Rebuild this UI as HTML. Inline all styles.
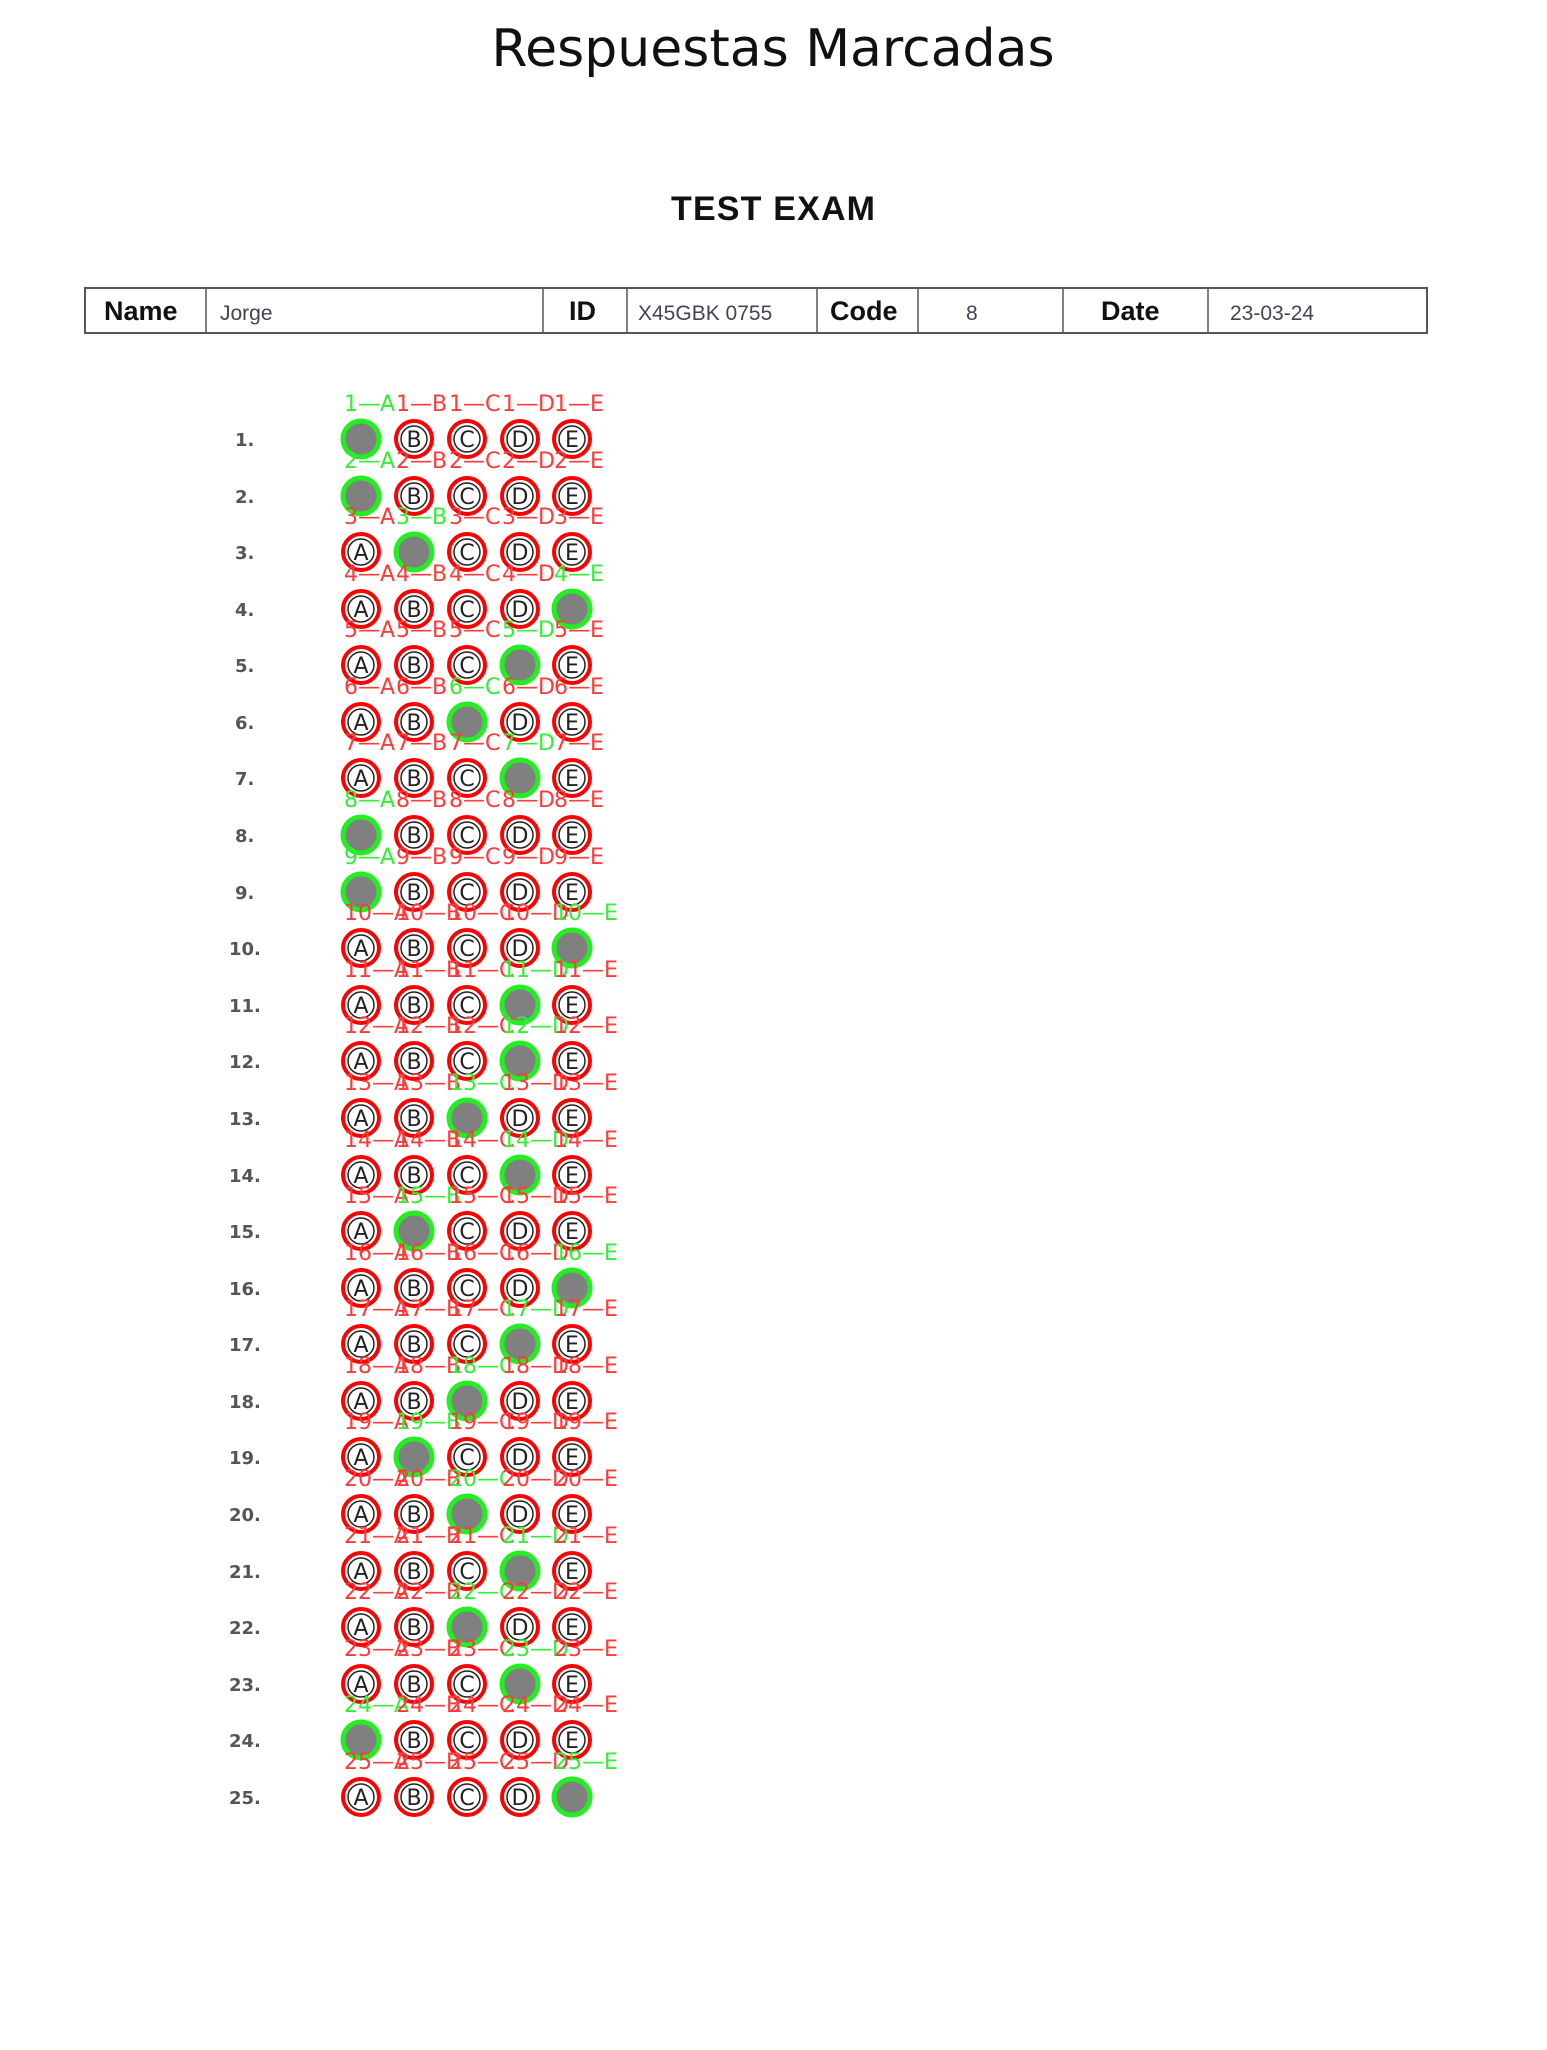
<!DOCTYPE html>
<html><head><meta charset="utf-8"><style>
body{margin:0;background:#fff;width:1547px;height:2050px;overflow:hidden}
svg{display:block}
.h{font-family:"DejaVu Sans",sans-serif;font-size:52px;fill:#111}
.t{font-family:"Liberation Sans",sans-serif;font-weight:bold;font-size:34px;fill:#111}
.tb{font-family:"Liberation Sans",sans-serif;font-weight:bold;font-size:27px;fill:#111}
.tv{font-family:"Liberation Sans",sans-serif;font-size:21px;fill:#445}
.n{font-family:"DejaVu Sans",sans-serif;font-weight:bold;font-size:18px;fill:#555}
.l{font-family:"DejaVu Sans",sans-serif;font-size:22px;fill:#222;text-anchor:middle}
.r{font-family:"DejaVu Sans",sans-serif;font-size:22px;fill:#ff3a3a}
.g{font-family:"DejaVu Sans",sans-serif;font-size:22px;fill:#33ee33}
</style></head><body>
<svg width="1547" height="2050" viewBox="0 0 1547 2050">
<defs>
<g id="u"><circle r="18" fill="none" stroke="#f00" stroke-width="4"/><circle r="13" fill="none" stroke="#222" stroke-width="1.5"/></g>
<g id="m"><circle r="18" fill="#808080" stroke="#22ee22" stroke-width="5"/></g>
</defs>
<text x="773" y="66" text-anchor="middle" class="h">Respuestas Marcadas</text>
<text x="773" y="220" text-anchor="middle" class="t" textLength="204">TEST EXAM</text>
<rect x="85" y="288" width="1342" height="45" fill="none" stroke="#555" stroke-width="2"/>
<g stroke="#555" stroke-width="1.5">
<line x1="206" y1="288" x2="206" y2="333"/><line x1="543" y1="288" x2="543" y2="333"/><line x1="627" y1="288" x2="627" y2="333"/><line x1="817" y1="288" x2="817" y2="333"/><line x1="918" y1="288" x2="918" y2="333"/><line x1="1063" y1="288" x2="1063" y2="333"/><line x1="1208" y1="288" x2="1208" y2="333"/>
</g>
<text x="104" y="320" class="tb">Name</text>
<text x="220" y="320" class="tv">Jorge</text>
<text x="569" y="320" class="tb">ID</text>
<text x="638" y="320" class="tv" font-size="19">X45GBK 0755</text>
<text x="830" y="320" class="tb">Code</text>
<text x="966" y="320" class="tv" font-size="19">8</text>
<text x="1101" y="320" class="tb">Date</text>
<text x="1230" y="320" class="tv" font-size="19">23-03-24</text>

<g transform="translate(0,439)"><text x="235" y="7" class="n">1.</text>
<use href="#m" x="361"/><use href="#u" x="414"/><text x="414" y="8" class="l">B</text><use href="#u" x="467"/><text x="467" y="8" class="l">C</text><use href="#u" x="520"/><text x="520" y="8" class="l">D</text><use href="#u" x="572"/><text x="572" y="8" class="l">E</text>
<text x="344" y="-28" class="g">1—A</text><text x="396" y="-28" class="r">1—B</text><text x="449" y="-28" class="r">1—C</text><text x="502" y="-28" class="r">1—D</text><text x="554" y="-28" class="r">1—E</text></g>

<g transform="translate(0,496)"><text x="235" y="7" class="n">2.</text>
<use href="#m" x="361"/><use href="#u" x="414"/><text x="414" y="8" class="l">B</text><use href="#u" x="467"/><text x="467" y="8" class="l">C</text><use href="#u" x="520"/><text x="520" y="8" class="l">D</text><use href="#u" x="572"/><text x="572" y="8" class="l">E</text>
<text x="344" y="-28" class="g">2—A</text><text x="396" y="-28" class="r">2—B</text><text x="449" y="-28" class="r">2—C</text><text x="502" y="-28" class="r">2—D</text><text x="554" y="-28" class="r">2—E</text></g>

<g transform="translate(0,552)"><text x="235" y="7" class="n">3.</text>
<use href="#u" x="361"/><text x="361" y="8" class="l">A</text><use href="#m" x="414"/><use href="#u" x="467"/><text x="467" y="8" class="l">C</text><use href="#u" x="520"/><text x="520" y="8" class="l">D</text><use href="#u" x="572"/><text x="572" y="8" class="l">E</text>
<text x="344" y="-28" class="r">3—A</text><text x="396" y="-28" class="g">3—B</text><text x="449" y="-28" class="r">3—C</text><text x="502" y="-28" class="r">3—D</text><text x="554" y="-28" class="r">3—E</text></g>

<g transform="translate(0,609)"><text x="235" y="7" class="n">4.</text>
<use href="#u" x="361"/><text x="361" y="8" class="l">A</text><use href="#u" x="414"/><text x="414" y="8" class="l">B</text><use href="#u" x="467"/><text x="467" y="8" class="l">C</text><use href="#u" x="520"/><text x="520" y="8" class="l">D</text><use href="#m" x="572"/>
<text x="344" y="-28" class="r">4—A</text><text x="396" y="-28" class="r">4—B</text><text x="449" y="-28" class="r">4—C</text><text x="502" y="-28" class="r">4—D</text><text x="554" y="-28" class="g">4—E</text></g>

<g transform="translate(0,665)"><text x="235" y="7" class="n">5.</text>
<use href="#u" x="361"/><text x="361" y="8" class="l">A</text><use href="#u" x="414"/><text x="414" y="8" class="l">B</text><use href="#u" x="467"/><text x="467" y="8" class="l">C</text><use href="#m" x="520"/><use href="#u" x="572"/><text x="572" y="8" class="l">E</text>
<text x="344" y="-28" class="r">5—A</text><text x="396" y="-28" class="r">5—B</text><text x="449" y="-28" class="r">5—C</text><text x="502" y="-28" class="g">5—D</text><text x="554" y="-28" class="r">5—E</text></g>

<g transform="translate(0,722)"><text x="235" y="7" class="n">6.</text>
<use href="#u" x="361"/><text x="361" y="8" class="l">A</text><use href="#u" x="414"/><text x="414" y="8" class="l">B</text><use href="#m" x="467"/><use href="#u" x="520"/><text x="520" y="8" class="l">D</text><use href="#u" x="572"/><text x="572" y="8" class="l">E</text>
<text x="344" y="-28" class="r">6—A</text><text x="396" y="-28" class="r">6—B</text><text x="449" y="-28" class="g">6—C</text><text x="502" y="-28" class="r">6—D</text><text x="554" y="-28" class="r">6—E</text></g>

<g transform="translate(0,778)"><text x="235" y="7" class="n">7.</text>
<use href="#u" x="361"/><text x="361" y="8" class="l">A</text><use href="#u" x="414"/><text x="414" y="8" class="l">B</text><use href="#u" x="467"/><text x="467" y="8" class="l">C</text><use href="#m" x="520"/><use href="#u" x="572"/><text x="572" y="8" class="l">E</text>
<text x="344" y="-28" class="r">7—A</text><text x="396" y="-28" class="r">7—B</text><text x="449" y="-28" class="r">7—C</text><text x="502" y="-28" class="g">7—D</text><text x="554" y="-28" class="r">7—E</text></g>

<g transform="translate(0,835)"><text x="235" y="7" class="n">8.</text>
<use href="#m" x="361"/><use href="#u" x="414"/><text x="414" y="8" class="l">B</text><use href="#u" x="467"/><text x="467" y="8" class="l">C</text><use href="#u" x="520"/><text x="520" y="8" class="l">D</text><use href="#u" x="572"/><text x="572" y="8" class="l">E</text>
<text x="344" y="-28" class="g">8—A</text><text x="396" y="-28" class="r">8—B</text><text x="449" y="-28" class="r">8—C</text><text x="502" y="-28" class="r">8—D</text><text x="554" y="-28" class="r">8—E</text></g>

<g transform="translate(0,892)"><text x="235" y="7" class="n">9.</text>
<use href="#m" x="361"/><use href="#u" x="414"/><text x="414" y="8" class="l">B</text><use href="#u" x="467"/><text x="467" y="8" class="l">C</text><use href="#u" x="520"/><text x="520" y="8" class="l">D</text><use href="#u" x="572"/><text x="572" y="8" class="l">E</text>
<text x="344" y="-28" class="g">9—A</text><text x="396" y="-28" class="r">9—B</text><text x="449" y="-28" class="r">9—C</text><text x="502" y="-28" class="r">9—D</text><text x="554" y="-28" class="r">9—E</text></g>

<g transform="translate(0,948)"><text x="229" y="7" class="n">10.</text>
<use href="#u" x="361"/><text x="361" y="8" class="l">A</text><use href="#u" x="414"/><text x="414" y="8" class="l">B</text><use href="#u" x="467"/><text x="467" y="8" class="l">C</text><use href="#u" x="520"/><text x="520" y="8" class="l">D</text><use href="#m" x="572"/>
<text x="344" y="-28" class="r">10—A</text><text x="396" y="-28" class="r">10—B</text><text x="449" y="-28" class="r">10—C</text><text x="502" y="-28" class="r">10—D</text><text x="554" y="-28" class="g">10—E</text></g>

<g transform="translate(0,1005)"><text x="229" y="7" class="n">11.</text>
<use href="#u" x="361"/><text x="361" y="8" class="l">A</text><use href="#u" x="414"/><text x="414" y="8" class="l">B</text><use href="#u" x="467"/><text x="467" y="8" class="l">C</text><use href="#m" x="520"/><use href="#u" x="572"/><text x="572" y="8" class="l">E</text>
<text x="344" y="-28" class="r">11—A</text><text x="396" y="-28" class="r">11—B</text><text x="449" y="-28" class="r">11—C</text><text x="502" y="-28" class="g">11—D</text><text x="554" y="-28" class="r">11—E</text></g>

<g transform="translate(0,1061)"><text x="229" y="7" class="n">12.</text>
<use href="#u" x="361"/><text x="361" y="8" class="l">A</text><use href="#u" x="414"/><text x="414" y="8" class="l">B</text><use href="#u" x="467"/><text x="467" y="8" class="l">C</text><use href="#m" x="520"/><use href="#u" x="572"/><text x="572" y="8" class="l">E</text>
<text x="344" y="-28" class="r">12—A</text><text x="396" y="-28" class="r">12—B</text><text x="449" y="-28" class="r">12—C</text><text x="502" y="-28" class="g">12—D</text><text x="554" y="-28" class="r">12—E</text></g>

<g transform="translate(0,1118)"><text x="229" y="7" class="n">13.</text>
<use href="#u" x="361"/><text x="361" y="8" class="l">A</text><use href="#u" x="414"/><text x="414" y="8" class="l">B</text><use href="#m" x="467"/><use href="#u" x="520"/><text x="520" y="8" class="l">D</text><use href="#u" x="572"/><text x="572" y="8" class="l">E</text>
<text x="344" y="-28" class="r">13—A</text><text x="396" y="-28" class="r">13—B</text><text x="449" y="-28" class="g">13—C</text><text x="502" y="-28" class="r">13—D</text><text x="554" y="-28" class="r">13—E</text></g>

<g transform="translate(0,1175)"><text x="229" y="7" class="n">14.</text>
<use href="#u" x="361"/><text x="361" y="8" class="l">A</text><use href="#u" x="414"/><text x="414" y="8" class="l">B</text><use href="#u" x="467"/><text x="467" y="8" class="l">C</text><use href="#m" x="520"/><use href="#u" x="572"/><text x="572" y="8" class="l">E</text>
<text x="344" y="-28" class="r">14—A</text><text x="396" y="-28" class="r">14—B</text><text x="449" y="-28" class="r">14—C</text><text x="502" y="-28" class="g">14—D</text><text x="554" y="-28" class="r">14—E</text></g>

<g transform="translate(0,1231)"><text x="229" y="7" class="n">15.</text>
<use href="#u" x="361"/><text x="361" y="8" class="l">A</text><use href="#m" x="414"/><use href="#u" x="467"/><text x="467" y="8" class="l">C</text><use href="#u" x="520"/><text x="520" y="8" class="l">D</text><use href="#u" x="572"/><text x="572" y="8" class="l">E</text>
<text x="344" y="-28" class="r">15—A</text><text x="396" y="-28" class="g">15—B</text><text x="449" y="-28" class="r">15—C</text><text x="502" y="-28" class="r">15—D</text><text x="554" y="-28" class="r">15—E</text></g>

<g transform="translate(0,1288)"><text x="229" y="7" class="n">16.</text>
<use href="#u" x="361"/><text x="361" y="8" class="l">A</text><use href="#u" x="414"/><text x="414" y="8" class="l">B</text><use href="#u" x="467"/><text x="467" y="8" class="l">C</text><use href="#u" x="520"/><text x="520" y="8" class="l">D</text><use href="#m" x="572"/>
<text x="344" y="-28" class="r">16—A</text><text x="396" y="-28" class="r">16—B</text><text x="449" y="-28" class="r">16—C</text><text x="502" y="-28" class="r">16—D</text><text x="554" y="-28" class="g">16—E</text></g>

<g transform="translate(0,1344)"><text x="229" y="7" class="n">17.</text>
<use href="#u" x="361"/><text x="361" y="8" class="l">A</text><use href="#u" x="414"/><text x="414" y="8" class="l">B</text><use href="#u" x="467"/><text x="467" y="8" class="l">C</text><use href="#m" x="520"/><use href="#u" x="572"/><text x="572" y="8" class="l">E</text>
<text x="344" y="-28" class="r">17—A</text><text x="396" y="-28" class="r">17—B</text><text x="449" y="-28" class="r">17—C</text><text x="502" y="-28" class="g">17—D</text><text x="554" y="-28" class="r">17—E</text></g>

<g transform="translate(0,1401)"><text x="229" y="7" class="n">18.</text>
<use href="#u" x="361"/><text x="361" y="8" class="l">A</text><use href="#u" x="414"/><text x="414" y="8" class="l">B</text><use href="#m" x="467"/><use href="#u" x="520"/><text x="520" y="8" class="l">D</text><use href="#u" x="572"/><text x="572" y="8" class="l">E</text>
<text x="344" y="-28" class="r">18—A</text><text x="396" y="-28" class="r">18—B</text><text x="449" y="-28" class="g">18—C</text><text x="502" y="-28" class="r">18—D</text><text x="554" y="-28" class="r">18—E</text></g>

<g transform="translate(0,1457)"><text x="229" y="7" class="n">19.</text>
<use href="#u" x="361"/><text x="361" y="8" class="l">A</text><use href="#m" x="414"/><use href="#u" x="467"/><text x="467" y="8" class="l">C</text><use href="#u" x="520"/><text x="520" y="8" class="l">D</text><use href="#u" x="572"/><text x="572" y="8" class="l">E</text>
<text x="344" y="-28" class="r">19—A</text><text x="396" y="-28" class="g">19—B</text><text x="449" y="-28" class="r">19—C</text><text x="502" y="-28" class="r">19—D</text><text x="554" y="-28" class="r">19—E</text></g>

<g transform="translate(0,1514)"><text x="229" y="7" class="n">20.</text>
<use href="#u" x="361"/><text x="361" y="8" class="l">A</text><use href="#u" x="414"/><text x="414" y="8" class="l">B</text><use href="#m" x="467"/><use href="#u" x="520"/><text x="520" y="8" class="l">D</text><use href="#u" x="572"/><text x="572" y="8" class="l">E</text>
<text x="344" y="-28" class="r">20—A</text><text x="396" y="-28" class="r">20—B</text><text x="449" y="-28" class="g">20—C</text><text x="502" y="-28" class="r">20—D</text><text x="554" y="-28" class="r">20—E</text></g>

<g transform="translate(0,1571)"><text x="229" y="7" class="n">21.</text>
<use href="#u" x="361"/><text x="361" y="8" class="l">A</text><use href="#u" x="414"/><text x="414" y="8" class="l">B</text><use href="#u" x="467"/><text x="467" y="8" class="l">C</text><use href="#m" x="520"/><use href="#u" x="572"/><text x="572" y="8" class="l">E</text>
<text x="344" y="-28" class="r">21—A</text><text x="396" y="-28" class="r">21—B</text><text x="449" y="-28" class="r">21—C</text><text x="502" y="-28" class="g">21—D</text><text x="554" y="-28" class="r">21—E</text></g>

<g transform="translate(0,1627)"><text x="229" y="7" class="n">22.</text>
<use href="#u" x="361"/><text x="361" y="8" class="l">A</text><use href="#u" x="414"/><text x="414" y="8" class="l">B</text><use href="#m" x="467"/><use href="#u" x="520"/><text x="520" y="8" class="l">D</text><use href="#u" x="572"/><text x="572" y="8" class="l">E</text>
<text x="344" y="-28" class="r">22—A</text><text x="396" y="-28" class="r">22—B</text><text x="449" y="-28" class="g">22—C</text><text x="502" y="-28" class="r">22—D</text><text x="554" y="-28" class="r">22—E</text></g>

<g transform="translate(0,1684)"><text x="229" y="7" class="n">23.</text>
<use href="#u" x="361"/><text x="361" y="8" class="l">A</text><use href="#u" x="414"/><text x="414" y="8" class="l">B</text><use href="#u" x="467"/><text x="467" y="8" class="l">C</text><use href="#m" x="520"/><use href="#u" x="572"/><text x="572" y="8" class="l">E</text>
<text x="344" y="-28" class="r">23—A</text><text x="396" y="-28" class="r">23—B</text><text x="449" y="-28" class="r">23—C</text><text x="502" y="-28" class="g">23—D</text><text x="554" y="-28" class="r">23—E</text></g>

<g transform="translate(0,1740)"><text x="229" y="7" class="n">24.</text>
<use href="#m" x="361"/><use href="#u" x="414"/><text x="414" y="8" class="l">B</text><use href="#u" x="467"/><text x="467" y="8" class="l">C</text><use href="#u" x="520"/><text x="520" y="8" class="l">D</text><use href="#u" x="572"/><text x="572" y="8" class="l">E</text>
<text x="344" y="-28" class="g">24—A</text><text x="396" y="-28" class="r">24—B</text><text x="449" y="-28" class="r">24—C</text><text x="502" y="-28" class="r">24—D</text><text x="554" y="-28" class="r">24—E</text></g>

<g transform="translate(0,1797)"><text x="229" y="7" class="n">25.</text>
<use href="#u" x="361"/><text x="361" y="8" class="l">A</text><use href="#u" x="414"/><text x="414" y="8" class="l">B</text><use href="#u" x="467"/><text x="467" y="8" class="l">C</text><use href="#u" x="520"/><text x="520" y="8" class="l">D</text><use href="#m" x="572"/>
<text x="344" y="-28" class="r">25—A</text><text x="396" y="-28" class="r">25—B</text><text x="449" y="-28" class="r">25—C</text><text x="502" y="-28" class="r">25—D</text><text x="554" y="-28" class="g">25—E</text></g>
</svg>
</body></html>
